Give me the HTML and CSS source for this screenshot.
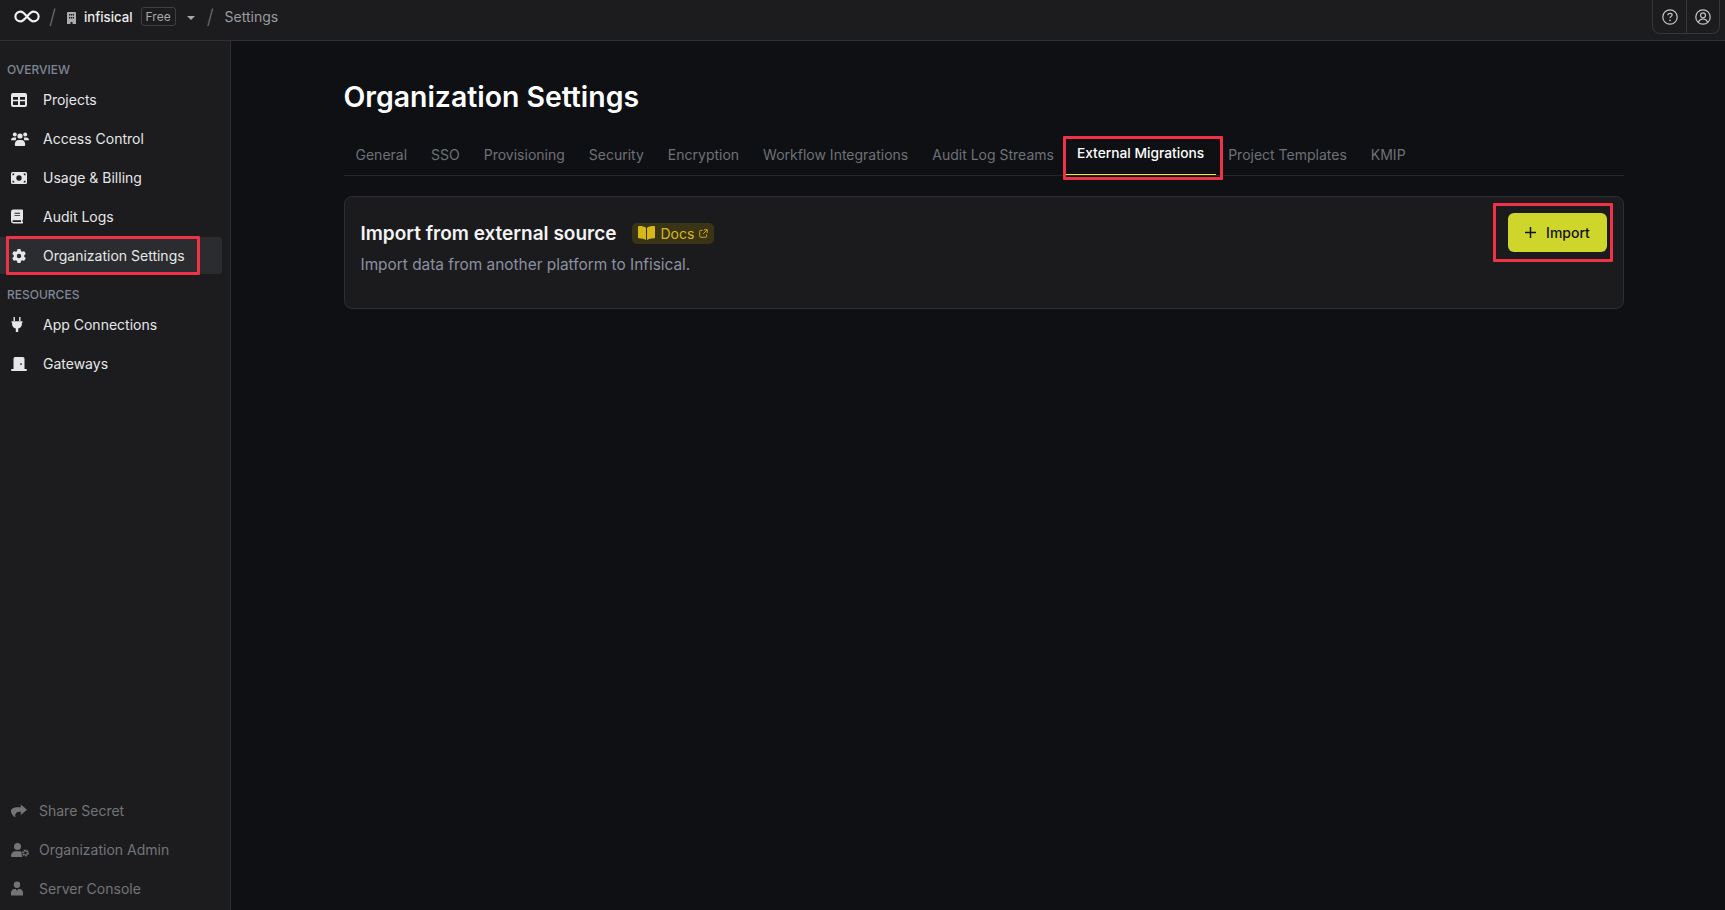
FILE: index.html
```html
<!DOCTYPE html>
<html>

<head>
    <title>Organization Settings</title>
    <link rel="stylesheet" href="styles.css">
</head>

<body>
    <div class="topbar">
        <svg class="topbar-logo" viewBox="0 0 26 12"><path d="M7 1.500c-2.600 0-4.800 2-4.800 4.500s2.200 4.500 4.800 4.500c4.400 0 7.600-9 12-9 2.600 0 4.800 2 4.800 4.500s-2.200 4.500-4.800 4.500c-4.400 0-7.600-9-12-9z" fill="none" stroke="#f2f2f2" stroke-width="2"/></svg>
        <span class="topbar-slash">/</span>
        <svg class="topbar-building" viewBox="0 0 9 12"><path fill-rule="evenodd" fill="#a9abae" d="M1 0h7a1 1 0 0 1 1 1v11H5.500v-2h-2v2H0V1a1 1 0 0 1 1-1zM2 2v1.500h1.300V2zM3.900 2v1.500h1.300V2zM5.800 2v1.500h1.200V2zM2 5v1.500h1.300V5zM3.900 5v1.500h1.300V5zM5.800 5v1.500h1.200V5z"/></svg>
        <span class="topbar-org">infisical</span>
        <span class="topbar-plan">Free</span>
        <span class="topbar-caret"></span>
        <span class="topbar-slash topbar-slash-page">/</span>
        <span class="topbar-page">Settings</span>
        <div class="topbar-actions">
            <button class="topbar-action">
                <svg viewBox="0 0 16 16" width="16" height="16"><circle cx="8" cy="8" r="7.200" fill="none" stroke="#c4c5c7" stroke-width="1.200"/><path d="M5.900 6.200c0-1.200 1-1.900 2.100-1.900s2.100.7 2.100 1.800c0 1.500-2.100 1.500-2.100 3" fill="none" stroke="#c4c5c7" stroke-width="1.200"/><circle cx="8" cy="11.400" r=".8" fill="#c4c5c7"/></svg>
            </button>
            <button class="topbar-action">
                <svg viewBox="0 0 16 16" width="16" height="16"><circle cx="8" cy="8" r="7.200" fill="none" stroke="#c4c5c7" stroke-width="1.200"/><circle cx="8" cy="6.300" r="2.500" fill="none" stroke="#c4c5c7" stroke-width="1.200"/><path d="M3.400 13c.8-2 2.500-3 4.600-3s3.800 1 4.600 3" fill="none" stroke="#c4c5c7" stroke-width="1.200"/></svg>
            </button>
        </div>
    </div>

    <div class="layout">
        <div class="sidebar">
            <div class="sidebar-label">OVERVIEW</div>
            <a class="sidebar-item">
                <svg class="sidebar-icon" viewBox="0 0 16 14"><path fill-rule="evenodd" d="M2 0h12a2 2 0 0 1 2 2v10a2 2 0 0 1-2 2H2a2 2 0 0 1-2-2V2a2 2 0 0 1 2-2zM2 4v2.800h5V4zM9 4v2.800h5V4zM2 8.300V12h5V8.300zM9 8.300V12h5V8.300z"/></svg>
                Projects
            </a>
            <a class="sidebar-item">
                <svg class="sidebar-icon sidebar-icon-wide" viewBox="0 0 18 14"><circle cx="3.800" cy="2.400" r="2"/><circle cx="14.200" cy="2.400" r="2"/><circle cx="9" cy="4" r="2.600"/><path d="M0 8.200C0 6.400 1.200 5.400 2.800 5.400h1.800c.3 0 .5.100.8.200-.5.800-.7 1.600-.5 2.600H0zM18 8.200c0-1.800-1.200-2.800-2.800-2.800h-1.800c-.3 0-.5.100-.8.200.5.800.7 1.600.5 2.600H18zM3.800 12.700c0-2.600 1.600-4.700 3.800-4.700h2.800c2.200 0 3.800 2.100 3.800 4.700 0 .7-.5 1.300-1.200 1.300H5c-.7 0-1.200-.6-1.200-1.300z"/></svg>
                Access Control
            </a>
            <a class="sidebar-item">
                <svg class="sidebar-icon" viewBox="0 0 16 12"><path fill-rule="evenodd" d="M1.500 0h13A1.500 1.500 0 0 1 16 1.500v9a1.500 1.500 0 0 1-1.500 1.500h-13A1.500 1.500 0 0 1 0 10.500v-9A1.500 1.500 0 0 1 1.500 0zM8 3.300a2.700 2.700 0 1 0 0 5.400 2.700 2.700 0 0 0 0-5.400zM1.500 1.500v2a2 2 0 0 0 2-2zM12.500 1.500a2 2 0 0 0 2 2v-2zM1.500 8.500v2h2a2 2 0 0 0-2-2zM14.500 8.500a2 2 0 0 0-2 2h2z"/></svg>
                Usage &amp; Billing
            </a>
            <a class="sidebar-item">
                <svg class="sidebar-icon sidebar-icon-narrow" viewBox="0 0 13 15"><path fill-rule="evenodd" d="M2.600 0H12a1 1 0 0 1 1 1v9.500a1 1 0 0 1-.6.900v1.700a.9.900 0 0 1 0 1.900H2.500A2.500 2.500 0 0 1 0 12.500v-10A2.500 2.500 0 0 1 2.600 0zM2.500 11.500a1 1 0 0 0 0 2h8.300v-2zM3.800 3.500v1h6v-1zM3.800 5.800v1h6v-1z"/></svg>
                Audit Logs
            </a>
            <a class="sidebar-item sidebar-item-active">
                <svg class="sidebar-icon sidebar-icon-gear" viewBox="0 0 512 512"><path d="M495.900 166.600c3.200 8.700 .5 18.400-6.400 24.600l-43.300 39.400c1.100 8.300 1.700 16.800 1.700 25.400s-.6 17.100-1.700 25.400l43.300 39.400c6.900 6.200 9.600 15.900 6.400 24.600c-4.400 11.900-9.700 23.300-15.800 34.300l-4.700 8.100c-6.600 11-14 21.400-22.100 31.200c-5.900 7.200-15.700 9.600-24.500 6.800l-55.700-17.700c-13.400 10.300-28.200 18.900-44 25.400l-12.500 57.100c-2 9.100-9 16.300-18.200 17.800c-13.800 2.300-28 3.500-42.500 3.500s-28.700-1.200-42.500-3.500c-9.200-1.500-16.200-8.700-18.200-17.800l-12.500-57.100c-15.800-6.500-30.600-15.100-44-25.400L83.100 425.900c-8.800 2.800-18.600 .3-24.500-6.800c-8.100-9.800-15.500-20.200-22.100-31.200l-4.700-8.100c-6.100-11-11.400-22.400-15.800-34.300c-3.200-8.700-.5-18.400 6.400-24.600l43.300-39.400C64.600 273.100 64 264.600 64 256s.6-17.100 1.700-25.400L22.400 191.200c-6.900-6.200-9.600-15.900-6.400-24.600c4.400-11.900 9.700-23.300 15.800-34.300l4.700-8.100c6.600-11 14-21.400 22.100-31.200c5.900-7.200 15.700-9.600 24.500-6.800l55.700 17.700c13.400-10.300 28.200-18.900 44-25.400l12.500-57.100c2-9.100 9-16.300 18.200-17.800C227.300 1.200 241.500 0 256 0s28.700 1.200 42.500 3.500c9.200 1.500 16.200 8.700 18.200 17.800l12.500 57.100c15.800 6.500 30.600 15.100 44 25.400l55.700-17.700c8.800-2.800 18.600-.3 24.500 6.800c8.100 9.800 15.500 20.200 22.100 31.200l4.700 8.100c6.100 11 11.400 22.400 15.800 34.300zM256 336a80 80 0 1 0 0-160 80 80 0 1 0 0 160z"/></svg>
                Organization Settings
                <span class="highlight highlight-sidebar"></span>
            </a>
            <div class="sidebar-label sidebar-label-resources">RESOURCES</div>
            <a class="sidebar-item">
                <svg class="sidebar-icon sidebar-icon-narrow" viewBox="0 0 11 15"><path d="M2 0h1.400v4H2zM7.600 0H9v4H7.600zM0 4.300h11v1.500h-.6v1.400c0 2.200-1.500 3.800-3.700 4.200V15H4.300v-3.600C2.100 11 .6 9.400 .6 7.200V5.800H0z"/></svg>
                App Connections
            </a>
            <a class="sidebar-item">
                <svg class="sidebar-icon" viewBox="0 0 16 14"><path fill-rule="evenodd" d="M4.200 0h7.600A1.700 1.700 0 0 1 13.500 1.700V12H15a1 1 0 0 1 0 2H1a1 1 0 0 1 0-2h1.500V1.700A1.700 1.700 0 0 1 4.200 0zM10 6.200a.9.900 0 1 0 0 1.800.9.900 0 0 0 0-1.800z"/></svg>
                Gateways
            </a>

            <div class="sidebar-footer">
                <a class="sidebar-item sidebar-item-muted">
                    <svg class="sidebar-icon" viewBox="0 0 16 13"><path d="M9.800 0 16 5.200 9.800 10.400V7.300C5.600 7.300 3.600 8.500 4.500 13 1.700 11.300 0 9 0 6.700 0 3.200 3.600 2.800 9.800 2.800z"/></svg>
                    Share Secret
                </a>
                <a class="sidebar-item sidebar-item-muted">
                    <svg class="sidebar-icon sidebar-icon-wide" viewBox="0 0 18 14"><circle cx="6.500" cy="3.500" r="3.500"/><path d="M4.500 8.300h4c.8 0 1.500.2 2.100.5-.2 1.200.1 3 .9 5.200H1a1 1 0 0 1-1-1c0-2.600 2-4.700 4.500-4.700z"/><circle cx="14.500" cy="10" r="2.300" fill="none" stroke="currentColor" stroke-width="2.200" stroke-dasharray="1.600 .5"/></svg>
                    Organization Admin
                </a>
                <a class="sidebar-item sidebar-item-muted">
                    <svg class="sidebar-icon sidebar-icon-narrow" viewBox="0 0 12 14"><circle cx="6" cy="3.200" r="3.200"/><path fill-rule="evenodd" d="M3.500 7.400h1.200L6 9.200l1.300-1.800h1.200c2 0 3.500 1.600 3.500 3.600V14H0v-3c0-2 1.500-3.600 3.500-3.600z"/></svg>
                    Server Console
                </a>
            </div>
        </div>

        <div class="main">
            <h1 class="main-title">Organization Settings</h1>

            <div class="tabs">
                <a class="tabs-item">General</a>
                <a class="tabs-item">SSO</a>
                <a class="tabs-item">Provisioning</a>
                <a class="tabs-item">Security</a>
                <a class="tabs-item">Encryption</a>
                <a class="tabs-item">Workflow Integrations</a>
                <a class="tabs-item">Audit Log Streams</a>
                <a class="tabs-item tabs-item-active">External Migrations
                    <span class="highlight highlight-tab"></span>
                </a>
                <a class="tabs-item">Project Templates</a>
                <a class="tabs-item">KMIP</a>
            </div>

            <div class="card">
                <div class="card-text">
                    <div class="card-heading">
                        <span class="card-title">Import from external source</span>
                        <a class="card-docs">
                            <svg class="card-docs-book" viewBox="0 0 16 13"><path d="M0 1c0-.6.4-1 1-1 2.800 0 5.200.5 6.500 1.600V13C6 12.100 3.700 11.600 1 11.500c-.6 0-1-.4-1-1zM16 1c0-.6-.4-1-1-1-2.800 0-5.200.5-6.500 1.600V13c1.500-.9 3.800-1.400 6.500-1.500.6 0 1-.4 1-1z"/></svg>
                            Docs
                            <svg class="card-docs-link" viewBox="0 0 10 10"><path d="M4 1.500H1.800a1 1 0 0 0-1 1v5.700a1 1 0 0 0 1 1h5.700a1 1 0 0 0 1-1V6M5.500 .8h3.700v3.700M9 1 4.500 5.500" fill="none" stroke="currentColor" stroke-width="1"/></svg>
                        </a>
                    </div>
                    <p class="card-desc">Import data from another platform to Infisical.</p>
                </div>
                <button class="card-button">
                    <svg viewBox="0 0 12 12" width="11" height="11"><path d="M6 0v12M0 6h12" stroke="#0e1014" stroke-width="1.600"/></svg>
                    Import
                    <span class="highlight highlight-button"></span>
                </button>
            </div>
        </div>
    </div>
</body>

</html>
```

FILE: styles.css
```css
* {
    box-sizing: border-box;
}

body {
    margin: 0;
    height: 910px;
    overflow: hidden;
    display: flex;
    flex-direction: column;
    background: #0e1014;
    color: #fff;
    font-family: Inter, "Liberation Sans", sans-serif;
}

.highlight {
    position: absolute;
    border: 3px solid #ef3248;
    border-radius: 1px;
    pointer-events: none;
}

.topbar {
    height: 41px;
    flex-shrink: 0;
    display: flex;
    align-items: center;
    padding: 0 5px 7px 13px;
    background: #1c1c1f;
    border-bottom: 1px solid #2f3033;
}

.topbar-logo {
    width: 28px;
    height: 13px;
}

.topbar-slash {
    margin: 0 11px 0 8px;
    color: #6d6e71;
    font-size: 20px;
    font-weight: 300;
}

.topbar-slash-page {
    margin-left: 12px;
}

.topbar-building {
    width: 9px;
    height: 12px;
    margin: 2px 8px 0 0;
}

.topbar-org {
    font-size: 13.200px;
    font-weight: 500;
    color: #eceded;
}

.topbar-plan {
    margin-left: 8px;
    height: 19px;
    padding: 0 4px;
    display: flex;
    align-items: center;
    border: 1px solid #3e3f42;
    border-radius: 3px;
    font-size: 12px;
    color: #a7a8aa;
}

.topbar-caret {
    margin: 2px 0 0 11px;
    border: 4px solid transparent;
    border-top: 4.500px solid #a7a8aa;
    border-bottom: none;
}

.topbar-page {
    font-size: 14px;
    color: #9a9b9e;
}

.topbar-actions {
    margin-left: auto;
    display: flex;
    height: 34px;
    margin-bottom: -1px;
    border: 1px solid #35363a;
    border-top: none;
    border-radius: 0 0 8px 8px;
}

.topbar-action {
    width: 33px;
    display: flex;
    align-items: center;
    justify-content: center;
    padding: 0;
    background: none;
    border: none;
}

.topbar-action + .topbar-action {
    border-left: 1px solid #35363a;
}

.layout {
    flex: 1;
    display: flex;
    min-height: 0;
}

.sidebar {
    width: 231px;
    flex-shrink: 0;
    display: flex;
    flex-direction: column;
    padding: 21px 8px 0 0;
    background: #1c1c1f;
    border-right: 1px solid #2f3033;
}

.sidebar-label {
    height: 16px;
    margin-bottom: 2px;
    padding-left: 7px;
    font-size: 12px;
    line-height: 16px;
    font-weight: 500;
    color: #7f8794;
}

.sidebar-label-resources {
    margin-top: 12px;
}

.sidebar-item {
    position: relative;
    height: 39px;
    flex-shrink: 0;
    display: flex;
    align-items: center;
    padding-left: 11px;
    font-size: 14px;
    color: #e6e7e8;
    white-space: nowrap;
}

.sidebar-icon {
    width: 16px;
    height: 14px;
    margin-right: 16px;
    flex-shrink: 0;
    fill: #e6e7e8;
}

.sidebar-icon-wide {
    width: 18px;
    margin-right: 14px;
}

.sidebar-icon-narrow {
    width: 12px;
    height: 15px;
    margin-right: 20px;
}

.sidebar-item-active {
    background: #2b2c2f;
    height: 37px;
    margin: 1px 0;
    border-radius: 0 4px 4px 0;
}

.sidebar-footer {
    margin-top: auto;
    padding-bottom: 2px;
}

.sidebar-item-muted {
    color: #737477;
}

.sidebar-item-muted .sidebar-icon {
    fill: #737477;
    margin-right: 12px;
}

.sidebar-item-muted .sidebar-icon-wide {
    margin-right: 10px;
}

.sidebar-item-muted .sidebar-icon-narrow {
    margin-right: 16px;
}

.highlight-sidebar {
    left: 6px;
    top: -1px;
    width: 194px;
    height: 39px;
}

.main {
    flex: 1;
    min-width: 0;
    padding: 34px 101px 0 112.500px;
}

.main-title {
    margin: 0;
    height: 44px;
    font-size: 28.400px;
    line-height: 44px;
    font-weight: 600;
}

.tabs {
    margin-top: 15px;
    height: 42px;
    display: flex;
    padding-left: 12px;
    gap: 24px;
    border-bottom: 1px solid #23252a;
}

.tabs-item {
    position: relative;
    height: 41px;
    display: flex;
    align-items: center;
    font-size: 14px;
    color: #6f7175;
    white-space: nowrap;
}

.tabs-item-active {
    margin: 0 -12px;
    padding: 0 12px 2px 11px;
    font-size: 13.750px;
    font-weight: 500;
    color: #fff;
    border-bottom: 1px solid #e0ed34;
}

.highlight-tab {
    left: -3px;
    top: 2px;
    width: 160px;
    height: 44px;
}

.card {
    margin-top: 20px;
    height: 113px;
    display: flex;
    justify-content: space-between;
    padding: 16px;
    background: #1b1b1e;
    border: 1px solid #2d2e32;
    border-radius: 8px;
}

.card-heading {
    display: flex;
    align-items: center;
    height: 32px;
    margin-top: 4px;
    gap: 16px;
}

.card-title {
    font-size: 19px;
    font-weight: 600;
    color: #f4f4f5;
}

.card-docs {
    height: 21px;
    display: flex;
    align-items: center;
    padding: 0 6px;
    gap: 5px;
    background: #3a3416;
    border-radius: 5px;
    font-size: 14px;
    color: #d8b818;
}

.card-docs-book {
    width: 17px;
    height: 14px;
    fill: #d8b818;
}

.card-docs-link {
    width: 9px;
    height: 9px;
}

.card-desc {
    margin: 6px 0 0;
    font-size: 15.400px;
    color: #8a91a0;
}

.card-button {
    position: relative;
    width: 99px;
    height: 39px;
    display: flex;
    align-items: center;
    justify-content: center;
    gap: 10px;
    padding: 0;
    background: #ced62c;
    border: none;
    border-radius: 6px;
    font-family: inherit;
    font-size: 14px;
    font-weight: 500;
    color: #0e1014;
}

.highlight-button {
    left: -15px;
    top: -10px;
    width: 120px;
    height: 59px;
}
```
